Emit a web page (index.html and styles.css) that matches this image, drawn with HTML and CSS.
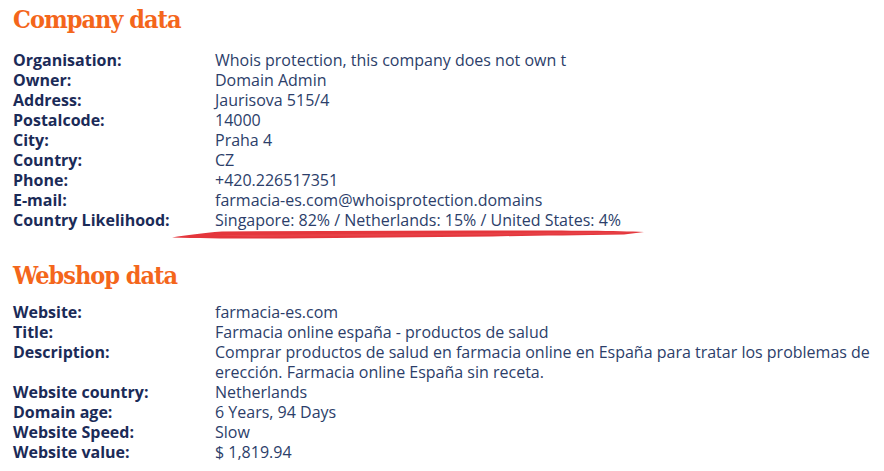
FILE: index.html
```html
<!DOCTYPE html>
<html lang="en">
<head>
    <meta charset="UTF-8">
    <title>Company and webshop data</title>
    <link rel="stylesheet" href="styles.css">
</head>
<body>

<div class="page">
    <h2 class="section-title first">Company data</h2>
    <div class="data-list">
        <div class="label">Organisation:</div><div class="value">Whois protection, this company does not own t</div>
        <div class="label">Owner:</div><div class="value">Domain Admin</div>
        <div class="label">Address:</div><div class="value">Jaurisova 515/4</div>
        <div class="label">Postalcode:</div><div class="value">14000</div>
        <div class="label">City:</div><div class="value">Praha 4</div>
        <div class="label">Country:</div><div class="value">CZ</div>
        <div class="label">Phone:</div><div class="value">+420.226517351</div>
        <div class="label">E-mail:</div><div class="value">farmacia-es.com@whoisprotection.domains</div>
        <div class="label">Country Likelihood:</div>
        <div class="value highlight">Singapore: 82% / Netherlands: 15% / United States: 4%
            <!-- red marker stroke under the likelihood line -->
            <svg class="brush" width="480" height="12" viewBox="0 0 480 12">
                <path d="M0 8.5 C15 6 30 4 50 2.5 L300 1.5 C380 1.5 440 1.5 472 3 L452 5.5 C400 6.5 360 6.5 320 7.5 L110 9.5 C60 9.5 30 9.5 0 8.5 Z" fill="#e4363c"/>
                <path d="M40 6 L420 3 L468 3.5 L430 5 L80 8 Z" fill="#e94a4f" opacity="0.6"/>
            </svg>
        </div>
    </div>

    <h2 class="section-title">Webshop data</h2>
    <div class="data-list">
        <div class="label">Website:</div><div class="value">farmacia-es.com</div>
        <div class="label">Title:</div><div class="value">Farmacia online españa - productos de salud</div>
        <div class="label">Description:</div><div class="value">Comprar productos de salud en farmacia online en España para tratar los problemas de erección. Farmacia online España sin receta.</div>
        <div class="label">Website country:</div><div class="value">Netherlands</div>
        <div class="label">Domain age:</div><div class="value">6 Years, 94 Days</div>
        <div class="label">Website Speed:</div><div class="value">Slow</div>
        <div class="label">Website value:</div><div class="value">$ 1,819.94</div>
    </div>
</div>

</body>
</html>
```

FILE: styles.css
```css
body {
    margin: 0;
    background: #fff;
    font-family: "Open Sans", sans-serif;
}
.page {
    padding: 0 8px 0 13px;
}
.section-title {
    margin: 28px 0 8px;
    font-family: "DejaVu Serif", serif;
    font-stretch: condensed;
    font-size: 25px;
    line-height: 36px;
    font-weight: bold;
    color: #f4661b;
    letter-spacing: -1px;
}
.section-title.first {
    margin: 2px 0 12px;
}
.data-list {
    display: grid;
    grid-template-columns: 202px 1fr;
    font-size: 16px;
    line-height: 20px;
}
.label {
    font-weight: bold;
    color: #1b2b58;
}
.value {
    color: #2c3e6a;
}
.highlight {
    position: relative;
}
.brush {
    position: absolute;
    left: -43px;
    top: 19px;
}
```
